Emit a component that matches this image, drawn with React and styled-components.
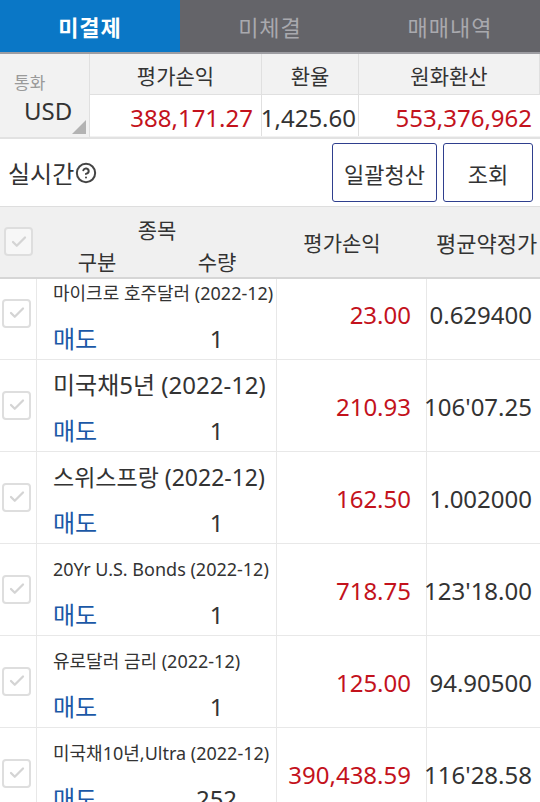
import React from 'react';
import styled, { createGlobalStyle } from 'styled-components';
import { Check, CircleHelp } from 'lucide-react';

const GlobalStyle = createGlobalStyle`
  html, body {
    margin: 0;
    padding: 0;
    background: #fff;
    overflow: hidden;
  }

  body {
    font-family: "Noto Sans", "Noto Sans CJK KR", sans-serif;
    color: #333;
  }
`;

const Page = styled.div`
  display: flex;
  flex-flow: column;
  width: 540px;
  height: 802px;
  overflow: hidden;
`;

const Tabs = styled.div`
  display: flex;
  height: 54px;
  background: #646469;
  border-bottom: 2px solid #9d9da2;
`;

const Tab = styled.div`
  flex: 1 1 0;
  display: flex;
  align-items: center;
  justify-content: center;
  font-size: 22px;
  letter-spacing: 1px;
  color: #a9a9ae;

  ${props => props.active && `
    background: #0a77c6;
    color: #fff;
    font-weight: 700;
  `}
`;

const Summary = styled.div`
  display: grid;
  grid-template-columns: 90px 172px 97px 1fr;
  grid-template-rows: 41px 42px;
  background: #f2f2f2;
  border-bottom: 2px solid #e2e2e2;
`;

const Currency = styled.div`
  position: relative;
  grid-row: 1 / 3;
  display: flex;
  flex-flow: column;
  padding: 18px 0 0 14px;
  border-right: 1px solid #e0e0e0;

  .Currency__label {
    font-size: 17px;
    color: #9a9a9a;
    line-height: 22px;
  }

  .Currency__code {
    font-size: 24px;
    line-height: 34px;
    margin-left: 10px;
    color: #333;
  }

  &::after {
    content: '';
    position: absolute;
    right: 3px;
    bottom: 3px;
    border-style: solid;
    border-width: 0 0 14px 14px;
    border-color: transparent transparent #b3b3b3 transparent;
  }
`;

const SumHead = styled.div`
  display: flex;
  align-items: center;
  justify-content: center;
  padding-top: 2px;
  font-size: 21px;
  color: #333;
  border-right: 1px solid #e0e0e0;
  border-bottom: 1px solid #e0e0e0;

  &:last-of-type {
    border-right: none;
  }
`;

const SumValue = styled.div`
  display: flex;
  align-items: center;
  justify-content: flex-end;
  padding-right: ${props => props.pad || 8}px;
  padding-top: 4px;
  background: #fff;
  font-size: 24px;
  white-space: nowrap;
  color: ${props => (props.red ? '#c3121c' : '#333')};
  border-right: 1px solid #e0e0e0;
  margin-bottom: 1px;

  &:last-child {
    border-right: none;
  }
`;

const Toolbar = styled.div`
  display: flex;
  align-items: center;
  height: 70px;
  padding: 0 7px 0 8px;
  border-bottom: 1px solid #dedede;
  box-sizing: border-box;

  .Toolbar__title {
    display: flex;
    align-items: center;
    gap: 1px;
    font-size: 24px;
    color: #333;
    flex: 1 1 auto;
  }
`;

const Button = styled.button`
  height: 59px;
  padding: 0;
  width: ${props => props.w}px;
  margin-left: 6px;
  border: 1.5px solid #2f3f8e;
  border-radius: 3px;
  background: #fff;
  font-family: inherit;
  font-size: 22px;
  color: #333;
`;

const Grid = styled.div`
  display: grid;
  grid-template-columns: 37px 240px 150px 113px;
`;

const HeadRow = styled(Grid)`
  height: 70px;
  background: #f0f0f0;
  border-bottom: 2px solid #d6d6d6;
  font-size: 21px;
  color: #333;
`;

const HeadCell = styled.div`
  display: flex;
  align-items: center;
  justify-content: ${props => props.align || 'center'};
  white-space: nowrap;
  overflow: hidden;
  font-size: ${props => props.size || 21}px;
  padding-left: ${props => props.padLeft || 0}px;
  padding-right: ${props => props.padRight || 0}px;
`;

const NameHead = styled.div`
  display: grid;
  grid-template-columns: 1fr 1fr;
  grid-template-rows: 40px 30px;
  align-items: center;
  text-align: center;

  .NameHead__title {
    grid-column: 1 / 3;
    padding-top: 4px;
  }

  .NameHead__sub {
    padding-bottom: 2px;
  }
`;

const Body = styled.div`
  flex: 1 1 auto;
  overflow: hidden;
`;

// the list is scrolled a little, so the first row is partly under the header
const List = styled.div`
  margin-top: -11px;
`;

const TRow = styled(Grid)`
  height: 92px;
  box-sizing: border-box;
  border-bottom: 1px solid #e8e8e8;
`;

const Cell = styled.div`
  display: flex;
  align-items: center;
  border-right: 1px solid #e8e8e8;
  white-space: nowrap;

  &:last-child {
    border-right: none;
  }
`;

const CheckCell = styled(Cell)`
  justify-content: center;
  padding-right: 3px;
`;

const StyledCheckBox = styled.span`
  display: inline-flex;
  align-items: center;
  justify-content: center;
  width: 29px;
  height: 29px;
  box-sizing: border-box;
  border: 2px solid #dedede;
  border-radius: 4px;
  background: ${props => props.bg || '#fff'};
`;

const CheckBox = ({ bg }) => (
  <StyledCheckBox bg={bg}>
    <Check size={18} strokeWidth={3} color="#d4d4d4" />
  </StyledCheckBox>
);

const NameCell = styled(Cell)`
  flex-flow: column;
  align-items: stretch;
  padding-left: 16px;
  overflow: hidden;

  .NameCell__name {
    font-size: ${props => props.size}px;
    line-height: 30px;
    padding-top: 10px;
    color: #333;
  }

  .NameCell__line {
    display: grid;
    grid-template-columns: 104px 1fr;
    margin-top: 16px;
    line-height: 30px;
    font-size: 24px;
  }

  .NameCell__side {
    color: #1b58a6;
  }

  .NameCell__qty {
    text-align: center;
    color: #333;
  }
`;

const PnlCell = styled(Cell)`
  justify-content: flex-end;
  padding-right: 15px;
  padding-top: 2px;
  font-size: 24px;
  color: #c3121c;
`;

const PriceCell = styled(Cell)`
  justify-content: flex-end;
  padding-right: 8px;
  padding-top: 2px;
  font-size: 24px;
  color: #333;
`;

const rows = [
  { name: '마이크로 호주달러 (2022-12)', size: 18, qty: '1', pnl: '23.00', price: '0.629400' },
  { name: '미국채5년 (2022-12)', size: 24, qty: '1', pnl: '210.93', price: "106'07.25" },
  { name: '스위스프랑 (2022-12)', size: 23, qty: '1', pnl: '162.50', price: '1.002000' },
  { name: '20Yr U.S. Bonds (2022-12)', size: 18, qty: '1', pnl: '718.75', price: "123'18.00" },
  { name: '유로달러 금리 (2022-12)', size: 18, qty: '1', pnl: '125.00', price: '94.90500' },
  { name: '미국채10년,Ultra (2022-12)', size: 18, qty: '252', pnl: '390,438.59', price: "116'28.58" },
];

const Row = ({ name, size, qty, pnl, price }) => (
  <TRow>
    <CheckCell>
      <CheckBox />
    </CheckCell>
    <NameCell size={size}>
      <div className="NameCell__name">{name}</div>
      <div className="NameCell__line">
        <span className="NameCell__side">매도</span>
        <span className="NameCell__qty">{qty}</span>
      </div>
    </NameCell>
    <PnlCell>{pnl}</PnlCell>
    <PriceCell>{price}</PriceCell>
  </TRow>
);

const App = () => (
  <Page>
    <GlobalStyle />
    <Tabs>
      <Tab active>미결제</Tab>
      <Tab>미체결</Tab>
      <Tab>매매내역</Tab>
    </Tabs>

    <Summary>
      <Currency>
        <span className="Currency__label">통화</span>
        <span className="Currency__code">USD</span>
      </Currency>
      <SumHead>평가손익</SumHead>
      <SumHead>환율</SumHead>
      <SumHead>원화환산</SumHead>
      <SumValue red>388,171.27</SumValue>
      <SumValue pad={2}>1,425.60</SumValue>
      <SumValue red>553,376,962</SumValue>
    </Summary>

    <Toolbar>
      <div className="Toolbar__title">
        실시간
        <CircleHelp size={22} strokeWidth={2.2} color="#444" />
      </div>
      <Button w={105}>일괄청산</Button>
      <Button w={90}>조회</Button>
    </Toolbar>

    <HeadRow>
      <HeadCell>
        <CheckBox bg="#f7f7f7" />
      </HeadCell>
      <NameHead>
        <span className="NameHead__title">종목</span>
        <span className="NameHead__sub">구분</span>
        <span className="NameHead__sub">수량</span>
      </NameHead>
      <HeadCell padRight={20}>평가손익</HeadCell>
      <HeadCell align="flex-start" padLeft={9} size={22}>평균약정가</HeadCell>
    </HeadRow>

    <Body>
      <List>
        {rows.map(row => (
          <Row key={row.name} {...row} />
        ))}
      </List>
    </Body>
  </Page>
);

export default App;
